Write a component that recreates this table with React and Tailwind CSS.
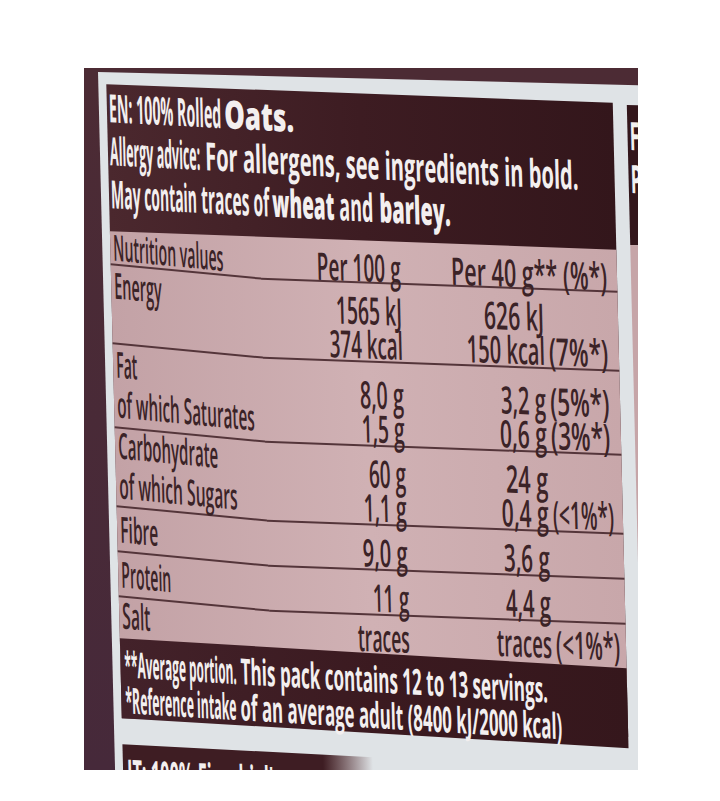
import { useLayoutEffect, useRef, useState } from 'react';

// squeezes a run of text into a fixed box width (the label is printed in a condensed face)
function Fit({ w, className = '', children }) {
  const box = useRef(null);
  const txt = useRef(null);
  const [k, setK] = useState(1);

  useLayoutEffect(() => {
    const fit = () => {
      if (box.current && txt.current && txt.current.offsetWidth) {
        setK(box.current.offsetWidth / txt.current.offsetWidth);
      }
    };
    fit();
    if (document.fonts) document.fonts.ready.then(fit);
  }, []);

  return (
    <span ref={box} className={`inline-block shrink-0 whitespace-nowrap ${w} ${className}`}>
      <span ref={txt} className="inline-block origin-left" style={{ transform: `scaleX(${k})` }}>
        {children}
      </span>
    </span>
  );
}

const line = 'border-b-2 border-[#54353a]';
const vals = 'self-end flex flex-col items-end';
const pct = 'self-end flex flex-col items-start pl-[4px]';

export default function App() {
  return (
    <div className="w-[720px] h-[801px] bg-white pl-[84px] pt-[68px] font-['Open_Sans',sans-serif]">
      <div className="w-[554px] h-[702px] overflow-hidden bg-linear-to-b from-[#4c2b34] to-[#46293a] pl-[14px] pt-[4px]">
        <div className="flex gap-[14px] h-[720px] w-[560px] bg-[#dfe3e6] pl-[8px] pt-[12px] origin-top-left skew-x-[1.4deg] skew-y-[1.4deg]">
          {/* main label */}
          <div className="flex flex-col w-[506px] shrink-0">
            <div className="origin-top-left skew-y-[0.7deg] bg-linear-to-r from-[#4b282e] via-[#3d1c22] to-[#33161b]">
              <div className="origin-top-left skew-y-[0.9deg] pl-[2px] pt-[1px] pb-[17px] text-[39px] leading-[43px] text-[#f3efef] font-bold">
                <div className="flex">
                  <Fit w="w-[112px]">EN: 100% Rolled</Fit>
                  <Fit w="w-[70px]" className="ml-[3px] font-extrabold">Oats.</Fit>
                </div>
                <div className="flex">
                  <Fit w="w-[90px]">Allergy advice:</Fit>
                  <Fit w="w-[373px]" className="ml-[5px]">For allergens, see ingredients in bold.</Fit>
                </div>
                <div className="flex">
                  <Fit w="w-[86px]">May contain</Fit>
                  <Fit w="w-[68px]" className="ml-[4px]">traces of</Fit>
                  <Fit w="w-[62px]" className="ml-[3px] font-extrabold">wheat</Fit>
                  <Fit w="w-[34px]" className="ml-[5px]">and</Fit>
                  <Fit w="w-[71px]" className="ml-[6px] font-extrabold">barley.</Fit>
                </div>
              </div>

              <div className="flex bg-linear-to-r from-[#c3a2a6] via-[#d0b1b4] to-[#c8a7aa] pb-[24px] text-[#3b2327] font-semibold">
                {/* name column, bent harder round the tub */}
                <div className="w-[150px] shrink-0 origin-top-left skew-y-[3.4deg] text-[36px]">
                  <div className={`h-[34px] pl-[3px] leading-[31px] ${line}`}>
                    <Fit w="w-[110px]">Nutrition values</Fit>
                  </div>
                  <div className={`h-[79px] pl-[3px] leading-[39px] ${line}`}>
                    <Fit w="w-[47px]">Energy</Fit>
                  </div>
                  <div className={`h-[84px] pl-[3px] flex flex-col leading-[40px] ${line}`}>
                    <Fit w="w-[21px]">Fat</Fit>
                    <Fit w="w-[137px]">of which Saturates</Fit>
                  </div>
                  <div className={`h-[79px] pl-[3px] flex flex-col leading-[40px] ${line}`}>
                    <Fit w="w-[100px]" className="-mt-[3px]">Carbohydrate</Fit>
                    <Fit w="w-[118px]">of which Sugars</Fit>
                  </div>
                  <div className={`h-[45px] pl-[3px] leading-[43px] ${line}`}>
                    <Fit w="w-[38px]">Fibre</Fit>
                  </div>
                  <div className={`h-[45px] pl-[3px] leading-[43px] ${line}`}>
                    <Fit w="w-[50px]">Protein</Fit>
                  </div>
                  <div className="h-[41px] pl-[3px] leading-[35px]">
                    <Fit w="w-[28px]">Salt</Fit>
                  </div>
                </div>

                {/* value columns */}
                <div className="w-[356px] shrink-0 mt-[9px] text-[38px] leading-[34px]">
                  <div className={`grid grid-cols-[140px_216px] h-[34px] ${line}`}>
                    <div className={vals}>
                      <Fit w="w-[84px]">Per 100 g</Fit>
                    </div>
                    <div className={`${vals} pr-[10px]`}>
                      <Fit w="w-[156px]">Per 40 g** (%*)</Fit>
                    </div>
                  </div>

                  <div className={`grid grid-cols-[140px_142px_74px] h-[79px] ${line}`}>
                    <div className={vals}>
                      <Fit w="w-[66px]">1565 kJ</Fit>
                      <Fit w="w-[73px]">374 kcal</Fit>
                    </div>
                    <div className={vals}>
                      <Fit w="w-[60px]">626 kJ</Fit>
                      <Fit w="w-[78px]">150 kcal</Fit>
                    </div>
                    <div className={pct}>
                      <Fit w="w-[59px]">(7%*)</Fit>
                    </div>
                  </div>

                  <div className={`grid grid-cols-[140px_142px_74px] h-[84px] ${line}`}>
                    <div className={vals}>
                      <Fit w="w-[44px]">8,0 g</Fit>
                      <Fit w="w-[43px]">1,5 g</Fit>
                    </div>
                    <div className={vals}>
                      <Fit w="w-[45px]">3,2 g</Fit>
                      <Fit w="w-[47px]">0,6 g</Fit>
                    </div>
                    <div className={pct}>
                      <Fit w="w-[59px]">(5%*)</Fit>
                      <Fit w="w-[59px]">(3%*)</Fit>
                    </div>
                  </div>

                  <div className={`grid grid-cols-[140px_142px_74px] h-[79px] ${line}`}>
                    <div className={vals}>
                      <Fit w="w-[37px]">60 g</Fit>
                      <Fit w="w-[43px]">1,1 g</Fit>
                    </div>
                    <div className={vals}>
                      <Fit w="w-[42px]">24 g</Fit>
                      <Fit w="w-[47px]">0,4 g</Fit>
                    </div>
                    <div className={pct}>
                      <Fit w="w-[61px]">(&lt;1%*)</Fit>
                    </div>
                  </div>

                  <div className={`grid grid-cols-[140px_142px_74px] h-[45px] ${line}`}>
                    <div className={vals}>
                      <Fit w="w-[45px]">9,0 g</Fit>
                    </div>
                    <div className={vals}>
                      <Fit w="w-[46px]">3,6 g</Fit>
                    </div>
                  </div>

                  <div className={`grid grid-cols-[140px_142px_74px] h-[45px] ${line}`}>
                    <div className={vals}>
                      <Fit w="w-[36px]">11 g</Fit>
                    </div>
                    <div className={vals}>
                      <Fit w="w-[45px]">4,4 g</Fit>
                    </div>
                  </div>

                  <div className="grid grid-cols-[140px_142px_74px] h-[41px] pt-[4px]">
                    <div className="flex flex-col items-end">
                      <Fit w="w-[52px]">traces</Fit>
                    </div>
                    <div className="flex flex-col items-end">
                      <Fit w="w-[55px]">traces</Fit>
                    </div>
                    <div className="flex flex-col items-start pl-[4px]">
                      <Fit w="w-[64px]">(&lt;1%*)</Fit>
                    </div>
                  </div>
                </div>
              </div>

              <div className="-mt-[33px] origin-top-left skew-y-[1.3deg] bg-linear-to-r from-[#43222a] via-[#3b1a20] to-[#35171c] pl-[4px] pt-[8px] h-[80px] text-[36px] leading-[36px] text-[#f3efef] font-bold">
                <div className="flex">
                  <Fit w="w-[112px]">**Average portion.</Fit>
                  <Fit w="w-[307px]" className="ml-[4px]">This pack contains 12 to 13 servings.</Fit>
                </div>
                <div className="flex">
                  <Fit w="w-[111px]">*Reference intake</Fit>
                  <Fit w="w-[321px]" className="ml-[4px]">of an average adult (8400 kJ/2000 kcal)</Fit>
                </div>
              </div>
            </div>

            <div className="mt-[26px] w-[250px] h-[70px] origin-top-left skew-y-[1.6deg] bg-linear-to-r from-[#3e1d23] from-80% to-[#dfe3e6] pl-[4px] pt-[6px] text-[39px] leading-[43px] text-[#f3efef] font-bold">
              <Fit w="w-[200px]">IT: 100% Fiocchi d'avena.</Fit>
            </div>
          </div>

          {/* next language panel, mostly out of frame */}
          <div className="w-[200px] shrink-0 mt-[8px] origin-top-left skew-y-[0.7deg]">
            <div className="h-[140px] bg-[#33161b] pl-[2px] pt-[8px] text-[39px] leading-[43px] text-[#f3efef] font-bold whitespace-nowrap">
              <div className="origin-left scale-x-[0.45]">FR: 100% Flocons d'avoine.</div>
              <div className="origin-left scale-x-[0.45]">Pour les allergènes</div>
            </div>
            <div className="h-[400px] bg-[#c6a5a8]" />
          </div>
        </div>
      </div>
    </div>
  );
}
